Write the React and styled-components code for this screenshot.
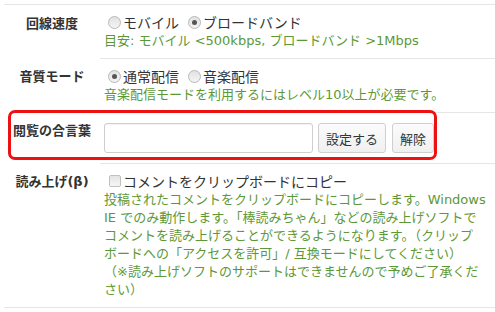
import React from "react";
import styled, { createGlobalStyle } from "styled-components";

const Global = createGlobalStyle`
  html, body { margin: 0; padding: 0; background: #fff; }
  body {
    font-family: "DejaVu Sans", "Noto Sans CJK JP", sans-serif;
    font-size: 13px;
    color: #333;
  }
`;

const Table = styled.div`
  margin: 4px 0 0 4px;
  border-top: 1px solid #e6e6e6;
  border-bottom: 1px solid #e6e6e6;
`;

const Row = styled.div`
  position: relative;
  display: grid;
  grid-template-columns: 96px 1fr;
`;

const Label = styled.div`
  padding-top: 10px;
  text-align: center;
  font-weight: bold;
  font-size: 13px;
  line-height: 18px;
  color: #333;
  white-space: nowrap;
`;

const Value = styled.div`
  padding: ${(p) => (p.$form ? "10px 4px 10px 4px" : "7px 4px 8px 4px")};
  border-top: ${(p) => (p.$first ? "none" : "1px solid #e6e6e6")};
`;

const Options = styled.div`
  display: flex;
  align-items: center;
  gap: 9px;
  height: 20px;
  padding-left: 4px;
  font-family: "Noto Sans CJK JP", sans-serif;
  font-size: 14px;
  color: #333;
`;

const Option = styled.label`
  display: flex;
  align-items: center;
  gap: 2px;
  line-height: 20px;
`;

const Radio = styled.span`
  width: 11px;
  height: 11px;
  border-radius: 50%;
  border: 1px solid #b8b8b8;
  background: linear-gradient(#e2e2e2, #f4f4f4);
  display: flex;
  align-items: center;
  justify-content: center;
  &::after {
    content: "";
    width: 5px;
    height: 5px;
    border-radius: 50%;
    background: ${(p) => (p.$checked ? "#555" : "transparent")};
  }
`;

const Check = styled.span`
  width: 10px;
  height: 10px;
  border: 1px solid #c0c0c0;
  border-radius: 2px;
  background: linear-gradient(#e4e4e4, #f6f6f6);
  margin-left: 1px;
`;

const Note = styled.div`
  color: #5d9836;
  font-size: 13px;
  line-height: 18px;
  white-space: nowrap;
`;

const Form = styled.div`
  display: flex;
  gap: 5px;
`;

const Input = styled.input`
  box-sizing: border-box;
  width: 209px;
  height: 30px;
  border: 1px solid #cfcfcf;
  border-radius: 3px;
  background: #fff;
  box-shadow: inset 0 1px 1px rgba(0, 0, 0, 0.05);
  outline: none;
`;

const Button = styled.button`
  box-sizing: border-box;
  height: 30px;
  padding: 0 7px;
  border: 1px solid #cfcfcf;
  border-radius: 3px;
  background: linear-gradient(#fbfbfb, #f0f0f0);
  font-family: "Noto Sans CJK JP", sans-serif;
  font-size: 13px;
  color: #333;
  margin-left: ${(p) => p.$ml || 0}px;
`;

const Highlight = styled.div`
  position: absolute;
  left: 4px;
  top: -2px;
  width: 423px;
  height: 44px;
  border: 3px solid #ee1111;
  border-radius: 7px;
  pointer-events: none;
`;

export default function App() {
  return (
    <>
      <Global />
      <Table>
        <Row>
          <Label>回線速度</Label>
          <Value $first>
            <Options>
              <Option><Radio />モバイル</Option>
              <Option><Radio $checked />ブロードバンド</Option>
            </Options>
            <Note>目安: モバイル &lt;500kbps, ブロードバンド &gt;1Mbps</Note>
          </Value>
        </Row>
        <Row>
          <Label>音質モード</Label>
          <Value>
            <Options>
              <Option><Radio $checked />通常配信</Option>
              <Option><Radio />音楽配信</Option>
            </Options>
            <Note>音楽配信モードを利用するにはレベル10以上が必要です。</Note>
          </Value>
        </Row>
        <Row>
          <Label>閲覧の合言葉</Label>
          <Value $form>
            <Form>
              <Input type="text" />
              <Button>設定する</Button>
              <Button $ml={1}>解除</Button>
            </Form>
          </Value>
          <Highlight />
        </Row>
        <Row>
          <Label>読み上げ(β)</Label>
          <Value>
            <Options>
              <Option><Check />コメントをクリップボードにコピー</Option>
            </Options>
            <Note>
              投稿されたコメントをクリップボードにコピーします。Windows<br />
              IE でのみ動作します。「棒読みちゃん」などの読み上げソフトで<br />
              コメントを読み上げることができるようになります。（クリップ<br />
              ボードへの「アクセスを許可」/ 互換モードにしてください）<br />
              （※読み上げソフトのサポートはできませんので予めご了承くだ<br />
              さい）
            </Note>
          </Value>
        </Row>
      </Table>
    </>
  );
}
